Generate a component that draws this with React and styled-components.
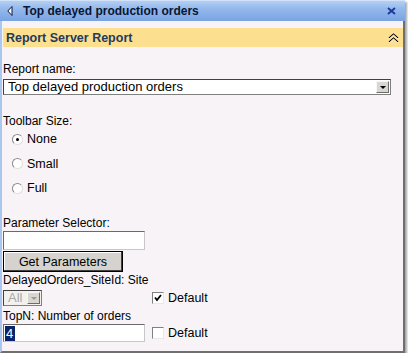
import React from "react";
import styled, { createGlobalStyle } from "styled-components";

const GlobalStyle = createGlobalStyle`
  body {
    margin: 0;
    background: #ffffff;
    font-family: "Liberation Sans", Arial, sans-serif;
  }
`;

const Frame = styled.div`
  width: 405px;
  height: 353px;
  box-sizing: border-box;
  background: #f7f3f7;
  border-left: 2px solid #aac8ef;
  border-right: 2px solid #6f6f6f;
  border-bottom: 2px solid #6f6f6f;
  box-shadow: 2px 2px 2px rgba(0, 0, 0, 0.35);
  display: flex;
  flex-direction: column;
  & > * {
    flex-shrink: 0;
  }
`;

const TitleBar = styled.div`
  height: 21px;
  margin-left: -2px;
  margin-right: -2px;
  box-sizing: border-box;
  border-top: 1px solid #d2e2f8;
  background: linear-gradient(#b3cff5 0%, #93b8ec 40%, #7aa3e3 100%);
  display: flex;
  align-items: center;
  padding: 0 9px 0 7px;
  gap: 10px;
  font-size: 12px;
  font-weight: bold;
  color: #0a1633;
`;

const TitleText = styled.span`
  flex: 1;
`;

const Header = styled.div`
  margin: 7px 0 0 1px;
  height: 19px;
  background: #fde08f;
  display: flex;
  align-items: center;
  justify-content: space-between;
  padding: 0 4px 0 3px;
  font-size: 12.5px;
  font-weight: bold;
  color: #233a5e;
`;

const Body = styled.div`
  padding: 15px 10px 0 1px;
  display: flex;
  flex-direction: column;
  font-size: 12px;
  color: #000;
  & > * {
    flex-shrink: 0;
  }
`;

const Label = styled.div`
  line-height: 14px;
  margin-top: ${(p) => p.$mt || 0}px;
`;

const SelectBox = styled.div`
  margin-top: ${(p) => p.$mt || 0}px;
  width: ${(p) => p.$w}px;
  height: 16px;
  box-sizing: border-box;
  border: 1px solid #7f7f7f;
  border-top-color: #404040;
  border-left-color: #404040;
  background: ${(p) => (p.$disabled ? "#f3f1ee" : "#fff")};
  display: flex;
  align-items: center;
  font-size: 13px;
  color: ${(p) => (p.$disabled ? "#a8a8a8" : "#000")};
  padding-left: 4px;
`;

const SelectValue = styled.span`
  flex: 1;
  line-height: 14px;
`;

const DropButton = styled.div`
  width: 13px;
  height: 12px;
  margin-right: 1px;
  box-sizing: border-box;
  background: #d9d6d0;
  border: 1px solid;
  border-color: #f6f6f6 #6c6c6c #6c6c6c #f6f6f6;
  display: flex;
  align-items: center;
  justify-content: center;
  &::after {
    content: "";
    border-left: 3px solid transparent;
    border-right: 3px solid transparent;
    border-top: 3px solid ${(p) => (p.$disabled ? "#9a9a9a" : "#000")};
  }
`;

const RadioGroup = styled.div`
  display: flex;
  flex-direction: column;
  gap: 10.5px;
  padding-left: 9px;
  margin-top: 4px;
`;

const Option = styled.label`
  display: flex;
  align-items: center;
  gap: 4px;
  height: 14px;
  font-size: 12.5px;
`;

const RadioDot = styled.span`
  width: 11px;
  height: 11px;
  box-sizing: border-box;
  border-radius: 50%;
  background: #fff;
  border: 1px solid #8a8a8a;
  border-right-color: #e0e0e0;
  border-bottom-color: #e0e0e0;
  display: flex;
  align-items: center;
  justify-content: center;
  &::after {
    content: "";
    width: 3px;
    height: 3px;
    border-radius: 50%;
    background: ${(p) => (p.$on ? "#000" : "transparent")};
  }
`;

const TextInput = styled.div`
  margin-top: 1px;
  width: 142px;
  height: ${(p) => p.$h || 19}px;
  box-sizing: border-box;
  border: 1px solid #c8c8c8;
  border-top-color: #6a6a6a;
  border-left-color: #6a6a6a;
  background: #fff;
  display: flex;
  align-items: center;
  padding-left: 1px;
`;

const Selected = styled.span`
  background: #0a246a;
  color: #fff;
  font-size: 13px;
  line-height: 15px;
  padding: 0 2px 0 1px;
`;

const Button = styled.div`
  margin-top: 1px;
  width: 120px;
  height: 21px;
  box-sizing: border-box;
  background: #d6d3ce;
  border: 1px solid #000;
  box-shadow: inset -1px -1px 0 #404040, inset 1px 1px 0 #ffffff;
  display: flex;
  align-items: center;
  justify-content: center;
  font-size: 12.5px;
`;

const Row = styled.div`
  display: flex;
  align-items: center;
  margin-top: ${(p) => p.$mt || 0}px;
`;

const Check = styled.span`
  width: 12px;
  height: 12px;
  box-sizing: border-box;
  border: 1px solid #808080;
  border-right-color: #e8e8e8;
  border-bottom-color: #e8e8e8;
  background: #fff;
  display: flex;
  align-items: center;
  justify-content: center;
`;

const DefaultBox = styled.label`
  display: flex;
  align-items: center;
  gap: 4px;
  margin-left: ${(p) => p.$ml}px;
  font-size: 12.5px;
`;

const BackArrow = () => (
  <svg width="6" height="10" viewBox="0 0 6 10">
    <path d="M5 0.5 L0.8 5 L5 9.5 Z" fill="#fff" stroke="#0a1633" strokeWidth="1" />
  </svg>
);

const CloseX = () => (
  <svg width="9" height="8" viewBox="0 0 9 8">
    <path d="M1 1 L8 7 M8 1 L1 7" stroke="#1c3c9a" strokeWidth="2" />
  </svg>
);

const Collapse = () => (
  <svg width="11" height="10" viewBox="0 0 11 10">
    <path d="M1 5 L5.5 1 L10 5 M1 9 L5.5 5 L10 9" stroke="#000" strokeWidth="1.1" fill="none" />
    <path d="M1 6 L5.5 2 L10 6 M1 10 L5.5 6 L10 10" stroke="#fff" strokeWidth="0.8" fill="none" />
  </svg>
);

const Tick = () => (
  <svg width="8" height="8" viewBox="0 0 8 8">
    <path d="M1 3.5 L3 6 L7 1" stroke="#000" strokeWidth="1.8" fill="none" />
  </svg>
);

export default function App() {
  return (
    <>
      <GlobalStyle />
      <Frame>
        <TitleBar>
          <BackArrow />
          <TitleText>Top delayed production orders</TitleText>
          <CloseX />
        </TitleBar>
        <Header>
          <span>Report Server Report</span>
          <Collapse />
        </Header>
        <Body>
          <Label>Report name:</Label>
          <SelectBox $w={388} $mt={3}>
            <SelectValue>Top delayed production orders</SelectValue>
            <DropButton />
          </SelectBox>

          <Label $mt={19}>Toolbar Size:</Label>
          <RadioGroup>
            <Option><RadioDot $on />None</Option>
            <Option><RadioDot />Small</Option>
            <Option><RadioDot />Full</Option>
          </RadioGroup>

          <Label $mt={21}>Parameter Selector:</Label>
          <TextInput />
          <Button>Get Parameters</Button>

          <Label $mt={1}>DelayedOrders_SiteId: Site</Label>
          <Row $mt={3}>
            <SelectBox $w={39} $disabled>
              <SelectValue>All</SelectValue>
              <DropButton $disabled />
            </SelectBox>
            <DefaultBox $ml={110}>
              <Check><Tick /></Check>
              Default
            </DefaultBox>
          </Row>
          <Label $mt={3}>TopN: Number of orders</Label>
          <Row>
            <TextInput $h={18}>
              <Selected>4</Selected>
            </TextInput>
            <DefaultBox $ml={7}>
              <Check />
              Default
            </DefaultBox>
          </Row>
        </Body>
      </Frame>
    </>
  );
}
